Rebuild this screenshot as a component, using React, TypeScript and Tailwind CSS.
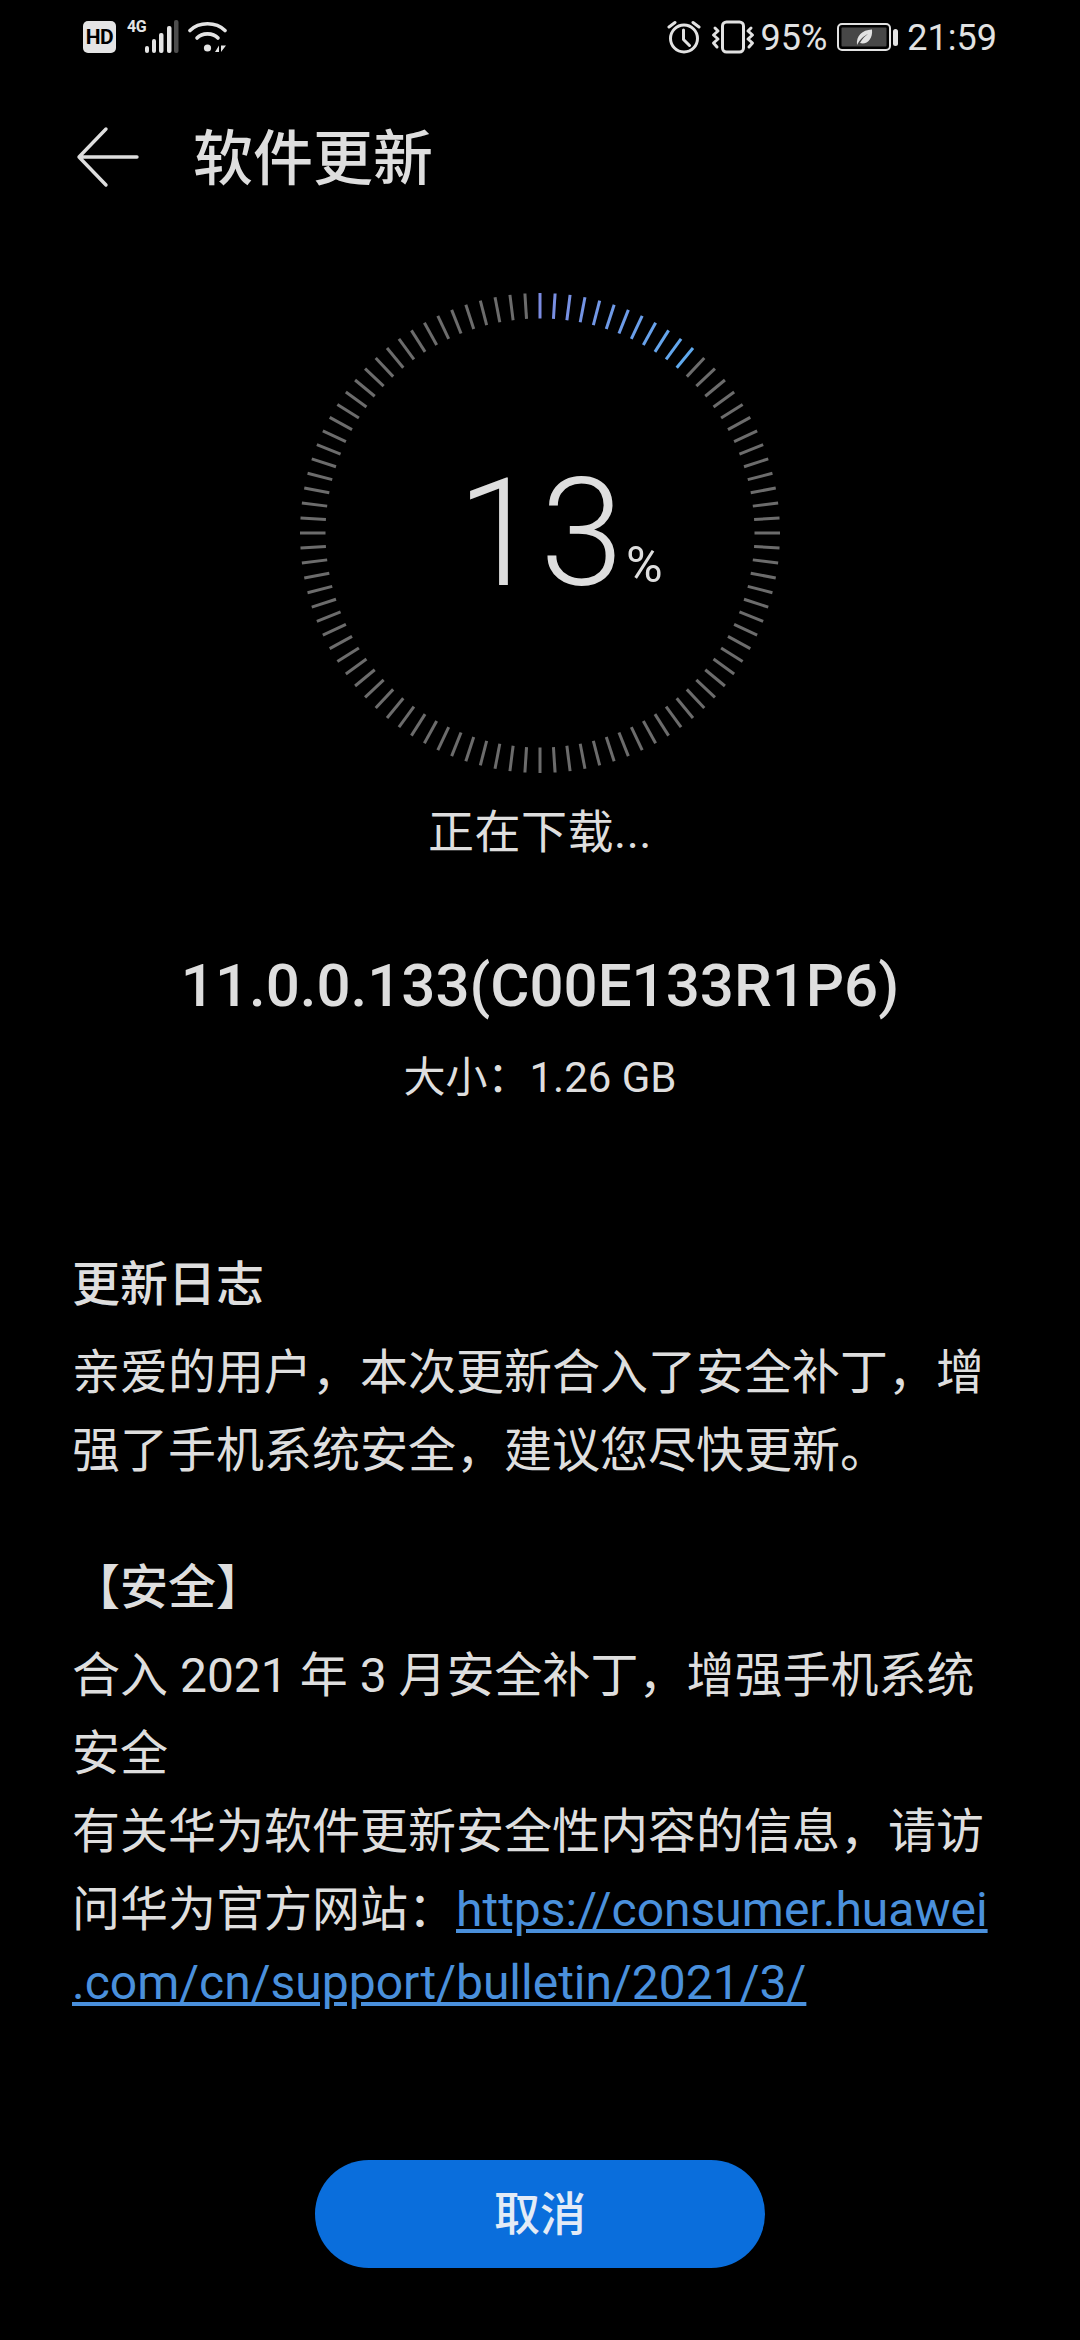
import React from 'react';

const TICKS = Array.from({ length: 100 }, (_, i) => i);

const tickColor = (i: number) => {
  if (i >= 12) return '#6c6c6c';
  // blue fades from violet-ish to sky over the done part
  const t = i / 11;
  const r = Math.round(124 - t * 28);
  const g = Math.round(140 + t * 30);
  const b = Math.round(226 + t * 12);
  return `rgb(${r},${g},${b})`;
};

const Ring: React.FC = () => (
  <svg width="480" height="480" viewBox="0 0 480 480" className="block">
    {TICKS.map((i) => {
      const a = (i * 3.6 * Math.PI) / 180;
      const s = Math.sin(a);
      const c = Math.cos(a);
      return (
        <line
          key={i}
          x1={240 + s * 214.5}
          y1={240 - c * 214.5}
          x2={240 + s * 240}
          y2={240 - c * 240}
          stroke={tickColor(i)}
          strokeWidth="3"
        />
      );
    })}
  </svg>
);

const StatusLeft: React.FC = () => (
  <div className="flex items-center">
    <div className="w-[33px] h-[32px] rounded-[5px] bg-[#e4e4e4] flex items-center justify-center text-black font-bold text-[21px] leading-none tracking-[-0.5px]">
      HD
    </div>
    <div className="ml-[11px] relative w-[55px] h-[34px]">
      <span className="absolute left-0 top-[-2px] text-[#e4e4e4] font-bold text-[16px] leading-[18px] tracking-[-0.5px]">4G</span>
      <svg width="55" height="34" viewBox="0 0 55 34" className="block">
        <rect x="18" y="26" width="4" height="7" rx="2" fill="#e4e4e4" />
        <rect x="25" y="19" width="4" height="14" rx="2" fill="#e4e4e4" />
        <rect x="32" y="13" width="4.5" height="20" rx="2" fill="#e4e4e4" />
        <rect x="40" y="6" width="4.5" height="27" rx="2" fill="#e4e4e4" />
        <rect x="47" y="0" width="4.5" height="33" rx="2" fill="#4d4d4d" />
      </svg>
    </div>
    <svg width="40" height="34" viewBox="0 0 40 34" className="ml-[6px] block">
      <g fill="none" stroke="#e4e4e4" strokeWidth="3.6" strokeLinecap="round">
        <path d="M2 10.5 C11 1.5 28 1.5 37 10.5" />
        <path d="M9 18 C14 12.5 25 12.5 30 18" />
      </g>
      <circle cx="19.5" cy="28" r="3.6" fill="#e4e4e4" />
      <path d="M27 32 L31 25.5 V32 Z M33 25.5 V32 L38 25.5 Z" fill="#e4e4e4" />
    </svg>
  </div>
);

const StatusRight: React.FC = () => (
  <div className="flex items-center text-[#e2e2e2] text-[36px] leading-none">
    <svg width="34" height="34" viewBox="0 0 34 34" className="block">
      <g fill="none" stroke="#e2e2e2" strokeWidth="3" strokeLinecap="round" strokeLinejoin="round">
        <circle cx="17" cy="18.5" r="13.5" />
        <path d="M16.5 10 V19.5 L22.5 25.5" />
        <path d="M2 7 L8 2.5 M32 7 L26 2.5" />
      </g>
    </svg>
    <svg width="44" height="34" viewBox="0 0 44 34" className="ml-[10px] block">
      <g fill="none" stroke="#e2e2e2" strokeWidth="3" strokeLinecap="round" strokeLinejoin="round">
        <rect x="11.5" y="2" width="21" height="30" rx="4" />
        <path d="M4 8 L7 11 L2.5 15 L7 19 L2.5 23 L6 27" />
        <path d="M40 8 L37 11 L41.5 15 L37 19 L41.5 23 L38 27" />
      </g>
    </svg>
    <span className="ml-[6px] mt-[2px]">95%</span>
    <svg width="62" height="30" viewBox="0 0 62 30" className="ml-[10px] block">
      <rect x="1" y="2" width="52" height="26" rx="4" fill="none" stroke="#e2e2e2" strokeWidth="2" />
      <rect x="4.5" y="5.5" width="45" height="19" rx="1" fill="#474747" />
      <rect x="56" y="7" width="5" height="17" rx="2.5" fill="#e2e2e2" />
      <path d="M20 23 C19 14 25 8 35 7.5 C36 17 30 23 23 21 C25 17 28 14 31 12 C27 14 23 17 20 23 Z" fill="#e2e2e2" />
    </svg>
    <span className="ml-[8px] mt-[2px]">21:59</span>
  </div>
);

const App: React.FC = () => {
  return (
    <div className="w-[1080px] h-[2340px] bg-black text-[#dedede] font-[Roboto,'Noto_Sans_CJK_SC',sans-serif] overflow-hidden">
      <div className="h-[74px] pl-[83px] pr-[83px] flex items-center justify-between">
        <StatusLeft />
        <StatusRight />
      </div>

      <div className="h-[166px] pl-[76px] flex items-center">
        <svg width="64" height="64" viewBox="0 0 64 64" className="block">
          <path d="M30 4 L3 32 L30 60 M3 32 H61" fill="none" stroke="#dedede" strokeWidth="3.4" strokeLinecap="round" strokeLinejoin="round" />
        </svg>
        <div className="ml-[53px] mt-[6px] text-[60px] leading-[80px] font-medium">软件更新</div>
      </div>

      <div className="mt-[53px] flex justify-center">
        <div className="relative w-[480px] h-[480px]">
          <Ring />
          <div className="absolute left-[157px] top-[156px] text-[150px] leading-[170px] font-light">13</div>
          <div className="absolute left-[326px] top-[243px] text-[50px] leading-[58px]">%</div>
        </div>
      </div>

      <div className="mt-[29px] text-center text-[46px] leading-[60px] tracking-[0.5px]">正在下载...</div>
      <div className="mt-[84px] text-center text-[60px] leading-[80px] font-medium">11.0.0.133(C00E133R1P6)</div>
      <div className="mt-[22px] text-center text-[42px] leading-[60px]">大小：1.26 GB</div>

      <div className="mt-[138px] px-[72px] text-[48px] leading-[78px]">
        <div className="font-medium">更新日志</div>
        <div className="mt-[10px]">
          亲爱的用户，本次更新合入了安全补丁，增
          <br />
          强了手机系统安全，建议您尽快更新。
        </div>
        <div className="mt-[59px] font-medium">【安全】</div>
        <div className="mt-[10px]">
          合入 2021 年 3 月安全补丁，增强手机系统
          <br />
          安全
          <br />
          有关华为软件更新安全性内容的信息，请访
          <br />
          问华为官方网站：
          <span className="text-[#4a90dc] underline">https://consumer.huawei</span>
        </div>
        <div className="-mt-[5px] text-[#4a90dc] underline">.com/cn/support/bulletin/2021/3/</div>
      </div>

      <div className="mt-[138px] flex justify-center">
        <button className="w-[450px] h-[108px] rounded-full bg-[#0a6edc] text-[#e3ebf6] text-[46px] font-medium">取消</button>
      </div>
    </div>
  );
};

export default App;
